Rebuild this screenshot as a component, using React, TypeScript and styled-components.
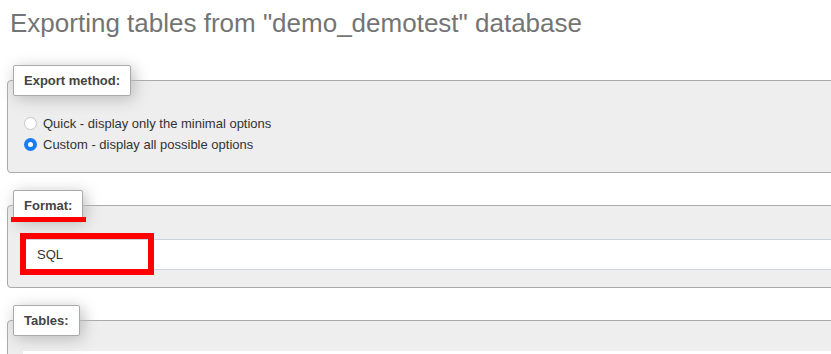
import styled, { createGlobalStyle } from "styled-components"

const GlobalStyle = createGlobalStyle`
  body {
    margin: 0;
    background: #ffffff;
    font-family: "Liberation Sans", Arial, sans-serif;
    overflow: hidden;
  }
`

const Page = styled.main`
  width: 900px;
  padding: 8px 0 0 7px;
`

const Title = styled.h2`
  margin: 0 0 27px 3px;
  font-size: 26px;
  line-height: 30px;
  font-weight: normal;
  color: #747474;
`

const Group = styled.fieldset`
  margin: 0 0 17px;
  padding: 0;
  min-width: 0;
  border: 1px solid #aaaaaa;
  border-radius: 4px;
  background: #eeeeee;
`

const Legend = styled.legend<{ $marked?: boolean }>`
  position: relative;
  margin-left: 5px;
  padding: 5px 10px;
  font-size: 13px;
  line-height: 19px;
  font-weight: bold;
  color: #444444;
  background: #ffffff;
  border: 1px solid #aaaaaa;
  border-radius: 2px;
  box-shadow: 3px 3px 15px #bbbbbb;

  ${({ $marked }) =>
    $marked &&
    `
    &::after {
      content: "";
      position: absolute;
      left: -3px;
      right: -4px;
      bottom: -2px;
      height: 5px;
      background: #ff0000;
    }
  `}
`

const Body = styled.div<{ $top: number; $left: number }>`
  padding: ${({ $top }) => $top}px 0 17px ${({ $left }) => $left}px;
`

const Choice = styled.label`
  display: flex;
  align-items: center;
  height: 21px;
  font-size: 13px;
  color: #333333;
`

const Radio = styled.input`
  appearance: none;
  box-sizing: border-box;
  width: 13px;
  height: 13px;
  margin: 0 6px 0 0;
  border: 1px solid #c6c6c6;
  border-radius: 50%;
  background: #ffffff;

  &:checked {
    border: 4px solid #1a7cf5;
  }
`

const SelectWrap = styled.div`
  position: relative;
`

const Select = styled.select`
  display: block;
  width: 860px;
  height: 31px;
  margin: 0;
  padding: 0 0 0 15px;
  appearance: none;
  border: 1px solid #cdd3dc;
  border-radius: 2px;
  background: #ffffff;
  font-family: "Liberation Sans", Arial, sans-serif;
  font-size: 13px;
  color: #333333;
`

const Highlight = styled.span`
  position: absolute;
  top: -6px;
  left: -1px;
  width: 134px;
  height: 42px;
  box-sizing: border-box;
  border: 6px solid #ff0000;
  pointer-events: none;
`

const TableArea = styled.div`
  height: 24px;
  background: #ffffff;
`

export default function App(): JSX.Element {
  return (
    <>
      <GlobalStyle />
      <Page>
        <Title>Exporting tables from "demo_demotest" database</Title>

        <Group>
          <Legend>Export method:</Legend>
          <Body $top={17} $left={16}>
            <Choice>
              <Radio type="radio" name="quick_or_custom" value="quick" />
              Quick - display only the minimal options
            </Choice>
            <Choice>
              <Radio type="radio" name="quick_or_custom" value="custom" defaultChecked />
              Custom - display all possible options
            </Choice>
          </Body>
        </Group>

        <Group>
          <Legend $marked>Format:</Legend>
          <Body $top={18} $left={13}>
            <SelectWrap>
              <Select defaultValue="sql">
                <option value="sql">SQL</option>
              </Select>
              <Highlight />
            </SelectWrap>
          </Body>
        </Group>

        <Group>
          <Legend>Tables:</Legend>
          <Body $top={15} $left={15}>
            <TableArea />
          </Body>
        </Group>
      </Page>
    </>
  )
}
